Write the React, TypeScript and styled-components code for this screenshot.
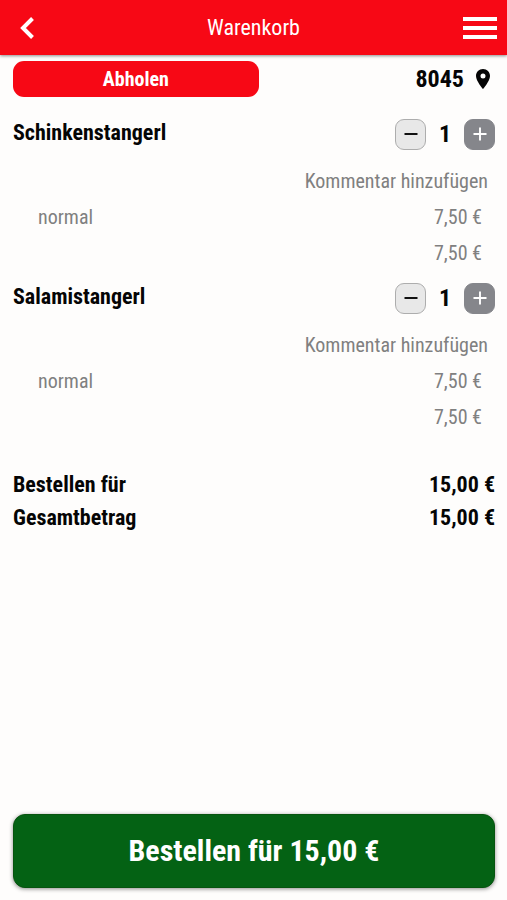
import React, { useState } from "react";
import styled, { createGlobalStyle } from "styled-components";

const GlobalStyle = createGlobalStyle`
  *, *::before, *::after { box-sizing: border-box; }
  body {
    margin: 0;
    background: #fefdfc;
    color: #050505;
    font-family: "Roboto Condensed", Roboto, sans-serif;
  }
  button { font-family: inherit; cursor: pointer; }
`;

const Page = styled.div`
  display: flex;
  flex-direction: column;
  min-height: 100vh;
`;

const Header = styled.header`
  display: grid;
  grid-template-columns: 48px 1fr 48px;
  align-items: center;
  height: 55px;
  padding: 0 3px;
  background: #f70815;
  color: #fff;
  box-shadow: 0 1px 3px rgba(0, 0, 0, 0.45);
`;

const Title = styled.h1`
  margin: 0;
  font-size: 22px;
  line-height: 32px;
  font-weight: 400;
  text-align: center;
`;

const IconButton = styled.button`
  display: flex;
  align-items: center;
  justify-content: center;
  height: 48px;
  padding: 0;
  border: 0;
  background: none;
  color: inherit;
`;

const Content = styled.main`
  flex: 1;
  padding: 6px 12px 0 13px;
`;

const TopBar = styled.div`
  display: flex;
  justify-content: space-between;
  align-items: center;
`;

const PickupButton = styled.button`
  width: 51%;
  height: 36px;
  padding: 0;
  border: 0;
  border-radius: 11px;
  background: #f70815;
  color: #fff;
  font-size: 20px;
  font-weight: 700;
`;

const Place = styled.button`
  display: flex;
  align-items: center;
  gap: 9px;
  padding: 0 2px 0 0;
  border: 0;
  background: none;
  color: inherit;
  font-size: 24px;
  line-height: 36px;
  font-weight: 700;
`;

const Items = styled.ul`
  margin: 19px 0 0;
  padding: 0;
  list-style: none;
`;

const Item = styled.li`
  padding-bottom: 9px;
`;

const ItemHead = styled.div`
  display: flex;
  justify-content: space-between;
  margin-bottom: 11px;
`;

const ItemName = styled.h2`
  margin: 0;
  font-size: 22px;
  line-height: 34px;
  font-weight: 700;
`;

const Stepper = styled.div`
  display: flex;
  align-items: center;
  height: 36px;
`;

const StepButton = styled.button<{ $filled?: boolean }>`
  display: flex;
  align-items: center;
  justify-content: center;
  width: 31px;
  height: 31px;
  padding: 0;
  border: 1px solid ${(p) => (p.$filled ? "#85868b" : "#adadad")};
  border-radius: 9px;
  background: ${(p) => (p.$filled ? "#85868b" : "#e8e8e8")};
  color: ${(p) => (p.$filled ? "#fff" : "#111")};
`;

const Count = styled.output`
  width: 38px;
  font-size: 24px;
  line-height: 36px;
  font-weight: 700;
  text-align: center;
`;

const Comment = styled.button`
  display: block;
  margin-left: auto;
  padding: 0 7px 0 0;
  border: 0;
  background: none;
  color: #808080;
  font-size: 20px;
  line-height: 36px;
`;

const Line = styled.div`
  display: flex;
  justify-content: space-between;
  padding: 0 13px 0 25px;
  color: #808080;
  font-size: 20px;
  line-height: 36px;
`;

const Sum = styled(Line)`
  justify-content: flex-end;
`;

const Totals = styled.dl`
  margin: 24px 0 0;
`;

const TotalRow = styled.div`
  display: flex;
  justify-content: space-between;
  font-size: 22px;
  line-height: 33px;
  font-weight: 700;

  dd { margin: 0; }
`;

const Footer = styled.footer`
  padding: 12px 12px 12px 13px;
`;

const OrderButton = styled.button`
  display: block;
  width: 100%;
  height: 74px;
  padding: 0 0 2px;
  border: 1px solid #07540f;
  border-radius: 12px;
  background: #046214;
  color: #fff;
  font-size: 30px;
  font-weight: 700;
  box-shadow: 0 1px 4px rgba(0, 0, 0, 0.45);
`;

const PRICE = 7.5;
const euro = (n: number) => `${n.toFixed(2).replace(".", ",")} €`;

function CartItem({ name, count, onChange }: { name: string; count: number; onChange: (n: number) => void }) {
  return (
    <Item>
      <ItemHead>
        <ItemName>{name}</ItemName>
        <Stepper>
          <StepButton type="button" aria-label={`${name} weniger`} onClick={() => onChange(Math.max(0, count - 1))}>
            <svg width="14" height="14" viewBox="0 0 14 14" stroke="currentColor" strokeWidth="2">
              <path d="M0.5 7h13" />
            </svg>
          </StepButton>
          <Count>{count}</Count>
          <StepButton type="button" $filled aria-label={`${name} mehr`} onClick={() => onChange(count + 1)}>
            <svg width="14" height="14" viewBox="0 0 14 14" stroke="currentColor" strokeWidth="1.9">
              <path d="M0.500 7h13M7 0.500v13" />
            </svg>
          </StepButton>
        </Stepper>
      </ItemHead>
      <Comment type="button">Kommentar hinzufügen</Comment>
      <Line>
        <span>normal</span>
        <span>{euro(PRICE)}</span>
      </Line>
      <Sum>{euro(PRICE * count)}</Sum>
    </Item>
  );
}

export default function App() {
  const names = ["Schinkenstangerl", "Salamistangerl"];
  const [counts, setCounts] = useState([1, 1]);
  const total = euro(counts.reduce((a, b) => a + b, 0) * PRICE);

  return (
    <Page>
      <GlobalStyle />
      <Header>
        <IconButton type="button" aria-label="Zurück">
          <svg width="24" height="24" viewBox="0 0 24 24" fill="none" stroke="currentColor" strokeWidth="4">
            <path d="M17.500 2.500 8 12l9.500 9.500" />
          </svg>
        </IconButton>
        <Title>Warenkorb</Title>
        <IconButton type="button" aria-label="Menü">
          <svg width="34" height="24" viewBox="0 0 34 24" fill="currentColor">
            <path d="M0 1h34v4H0zM0 10h34v4H0zM0 19h34v4H0z" />
          </svg>
        </IconButton>
      </Header>
      <Content>
        <TopBar>
          <PickupButton type="button">Abholen</PickupButton>
          <Place type="button">
            8045
            <svg width="20" height="22" viewBox="0 0 20 22" fill="currentColor" aria-hidden="true">
              <path
                fillRule="evenodd"
                d="M10 1C6 1 3 4 3 8c0 5 7 13 7 13s7-8 7-13c0-4-3-7-7-7zm0 4.500a2.500 2.500 0 1 1 0 5 2.500 2.500 0 0 1 0-5z"
              />
            </svg>
          </Place>
        </TopBar>
        <Items>
          {names.map((name, i) => (
            <CartItem
              key={name}
              name={name}
              count={counts[i]}
              onChange={(n) => setCounts(counts.map((c, j) => (j === i ? n : c)))}
            />
          ))}
        </Items>
        <Totals>
          <TotalRow>
            <dt>Bestellen für</dt>
            <dd>{total}</dd>
          </TotalRow>
          <TotalRow>
            <dt>Gesamtbetrag</dt>
            <dd>{total}</dd>
          </TotalRow>
        </Totals>
      </Content>
      <Footer>
        <OrderButton type="button">Bestellen für {total}</OrderButton>
      </Footer>
    </Page>
  );
}
